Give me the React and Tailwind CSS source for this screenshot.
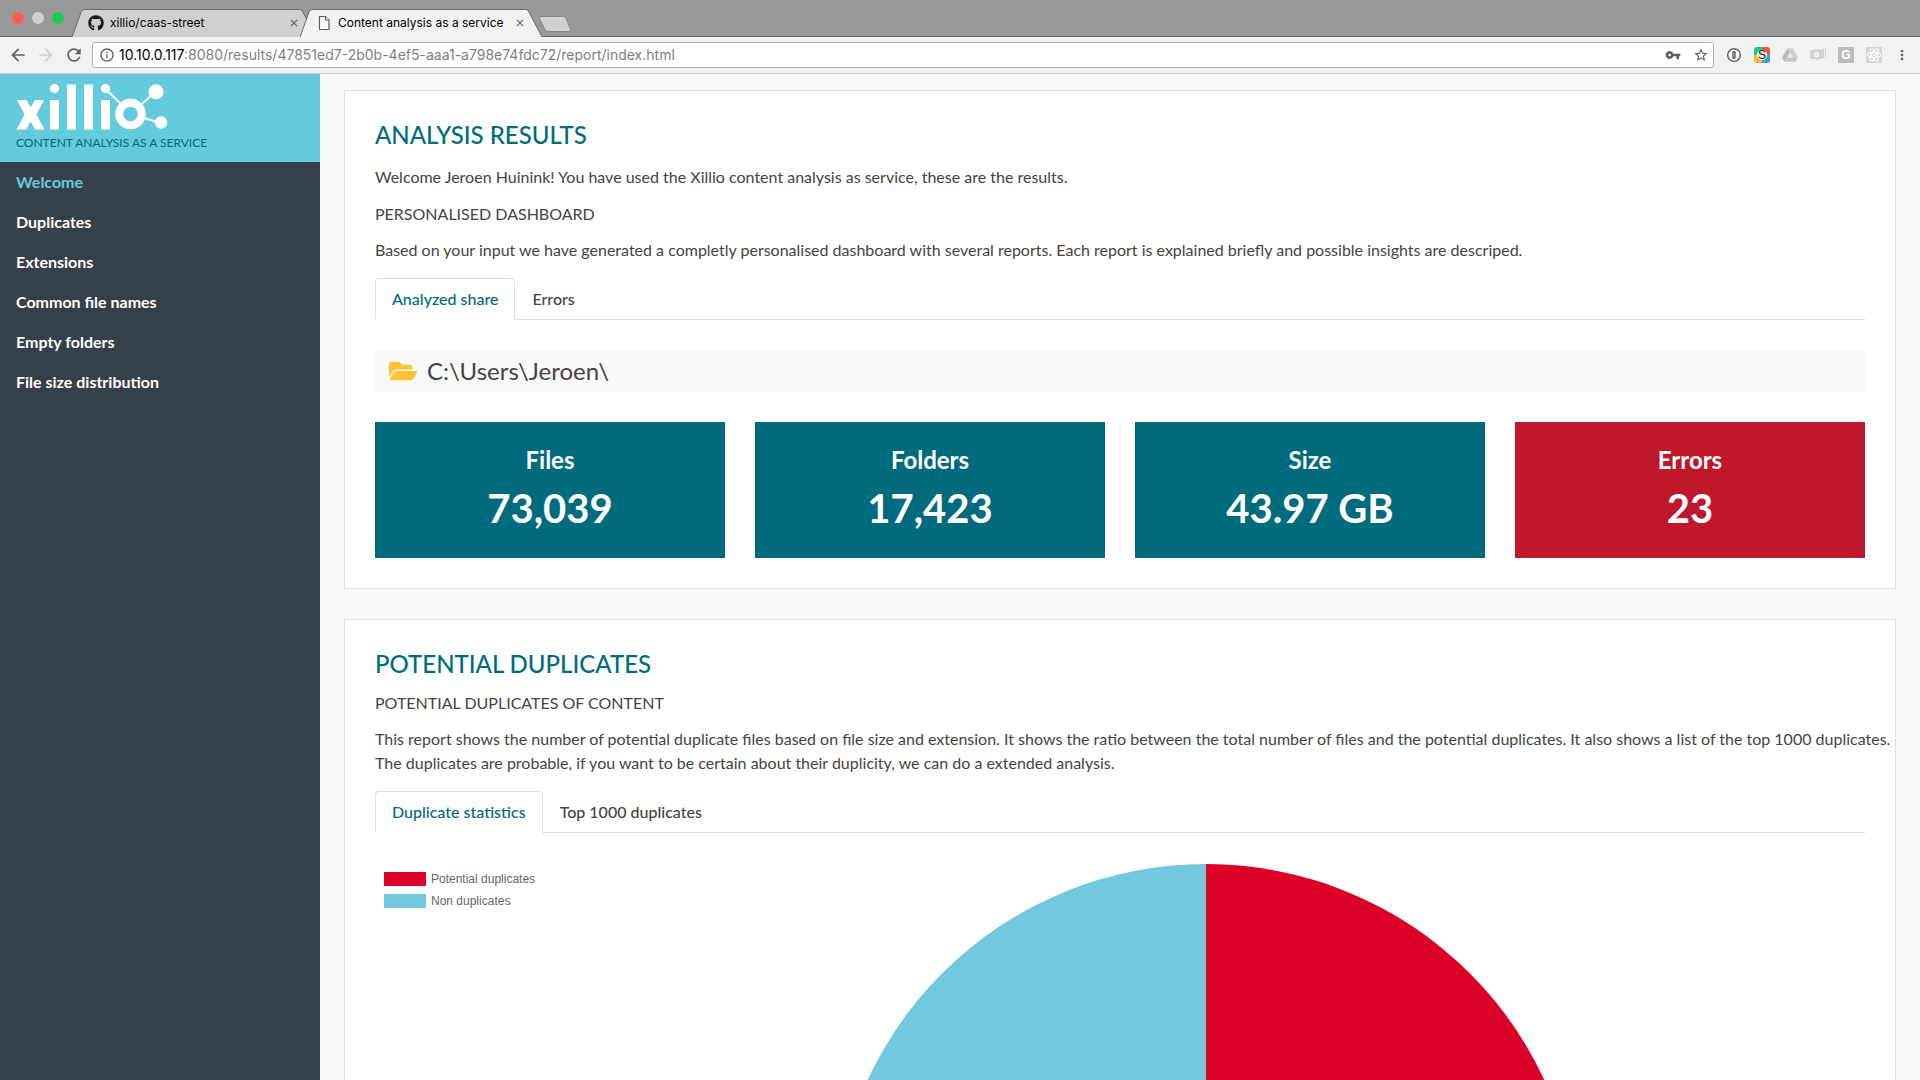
import React, { useState } from 'react';
import { FaFolderOpen, FaGithub } from 'react-icons/fa';
import { MdArrowBack, MdArrowForward, MdRefresh, MdClose, MdVpnKey, MdStarBorder, MdMoreVert, MdInfoOutline } from 'react-icons/md';

const NAV_ITEMS = [
  'Welcome',
  'Duplicates',
  'Extensions',
  'Common file names',
  'Empty folders',
  'File size distribution',
];

const STATS = [
  { label: 'Files', value: '73,039' },
  { label: 'Folders', value: '17,423' },
  { label: 'Size', value: '43.97 GB' },
  { label: 'Errors', value: '23', error: true },
];

const LEGEND = [
  { label: 'Potential duplicates', swatch: 'bg-[#dc0029]' },
  { label: 'Non duplicates', swatch: 'bg-[#72c8dd]' },
];

const BrowserTab = ({ title, icon, active, width }) => (
  <div className={`relative flex h-7 items-center ${width} ${active ? 'z-10' : '-mr-4'}`}>
    <svg className="absolute inset-0 h-full w-full" viewBox="0 0 240 28" preserveAspectRatio="none">
      <path
        d="M0 28 L9 3 Q10 .5 12 .5 L224 .5 Q226 .5 227 3 L240 28 Z"
        fill={active ? '#f2f2f2' : '#d0d0d0'}
      />
      <path
        d="M0 28 L9 3 Q10 .5 12 .5 L224 .5 Q226 .5 227 3 L240 28"
        fill="none"
        stroke="#6b6b6b"
        vectorEffect="non-scaling-stroke"
      />
    </svg>
    <div className="relative flex w-full items-center px-4">
      {icon}
      <span className="ml-1.5 flex-1 truncate text-xs text-black">{title}</span>
      <button type="button" aria-label={`Close ${title}`} className="text-[#5a5a5a]">
        <MdClose size={12} />
      </button>
    </div>
  </div>
);

const PageIcon = () => (
  <svg width="16" height="16" viewBox="0 0 16 16" fill="#fff" stroke="#5c5c5c" strokeWidth="1.2">
    <path d="M3.5 1.5h6l3.5 3.5v9.5h-9.5z" />
    <path d="M9.5 1.5v3.5h3.5" />
  </svg>
);

const Extensions = () => (
  <div className="flex items-center gap-3">
    <svg width="16" height="16" viewBox="0 0 16 16">
      <circle cx="8" cy="8" r="6.3" fill="#fff" stroke="#646467" strokeWidth="1.5" />
      <rect x="6.3" y="4" width="3.4" height="8" rx="1.2" fill="#646467" />
      <path d="M8 5.8v4.4" stroke="#ccc" strokeWidth=".7" />
    </svg>
    <svg width="16" height="16" viewBox="0 0 16 16">
      <path d="M3 0h5v8H0V3a3 3 0 0 1 3-3" fill="#1ecb82" />
      <path d="M8 0h5a3 3 0 0 1 3 3v5H8z" fill="#f0574a" />
      <path d="M0 8h8v8H3a3 3 0 0 1-3-3z" fill="#fbb42c" />
      <path d="M8 8h8v5a3 3 0 0 1-3 3H8z" fill="#3a9fdc" />
      <circle cx="8" cy="8" r="5.3" fill="#fff" opacity=".75" />
      <text x="8" y="12.3" textAnchor="middle" fontSize="12" fontFamily="Liberation Sans, sans-serif" fill="#1b2b3b">S</text>
    </svg>
    <svg width="16" height="16" viewBox="0 0 16 16">
      <path d="M5.5 1.2h5L16 10.5h-5z" fill="#cfcfcf" />
      <path d="M5.5 1.2 0 10.5l2.6 4.3L8 5.6z" fill="#b9b9b9" />
      <path d="M5.3 10.5H16l-2.6 4.3H2.6z" fill="#c4c4c4" />
      <path d="M8 6.2l2.5 4.3h-5z" fill="#e9e9e9" />
    </svg>
    <svg width="16" height="16" viewBox="0 0 16 16" fill="#d3d3d3">
      <path d="M1.5 2.5H12L14 1v10l-2 1H9.5L8 14l-1.5-2h-5A1.5 1.5 0 0 1 0 10.5V4a1.5 1.5 0 0 1 1.5-1.5" />
      <path d="M15 2h1v8.5h-1z" />
      <rect x="4.8" y="6" width="3.4" height="3.4" rx="1" fill="none" stroke="#fff" strokeWidth="1.3" />
    </svg>
    <svg width="16" height="16" viewBox="0 0 16 16">
      <rect width="16" height="16" fill="#bdbdbd" />
      <text x="8" y="12.3" textAnchor="middle" fontSize="12" fontWeight="700" fontFamily="Liberation Sans, sans-serif" fill="#fff">G</text>
    </svg>
    <svg width="16" height="16" viewBox="0 0 16 16">
      <rect width="16" height="16" fill="#d6d6d6" />
      <g fill="none" stroke="#fff" strokeWidth="1.1">
        <ellipse cx="8" cy="8" rx="6.6" ry="2.6" />
        <ellipse cx="8" cy="8" rx="6.6" ry="2.6" transform="rotate(60 8 8)" />
        <ellipse cx="8" cy="8" rx="6.6" ry="2.6" transform="rotate(120 8 8)" />
      </g>
      <circle cx="8" cy="8" r="1.3" fill="#fff" />
    </svg>
  </div>
);

const BrowserChrome = () => (
  <header className="shrink-0 font-['Inter',sans-serif]">
    <div className="flex h-[37px] items-end border-b border-[#6b6b6b] bg-[#999]">
      <div className="flex gap-2 self-center pr-2 pl-3">
        <span className="size-3 rounded-full bg-[#fc5b57]" />
        <span className="size-3 rounded-full bg-[#d0d0d0]" />
        <span className="size-3 rounded-full bg-[#1ccb4f]" />
      </div>
      <div className="-mb-px flex items-end">
        <BrowserTab title="xillio/caas-street" icon={<FaGithub size={16} color="#1b1b1b" />} width="w-[244px]" />
        <BrowserTab title="Content analysis as a service" icon={<PageIcon />} width="w-[242px]" active />
        <button type="button" aria-label="New tab" className="-ml-1 mb-1">
          <svg width="34" height="18" viewBox="0 0 34 18">
            <path d="M3 1.5h22.5q2 0 2.5 1.5l4.5 11.5q.5 2-1.5 2H9.5q-2 0-2.5-1.5L1.5 3.5q-.5-2 1.5-2" fill="#d0d0d0" stroke="#858585" />
          </svg>
        </button>
      </div>
    </div>
    <div className="flex h-[37px] items-center border-b border-[#cfcfcf] bg-[#f2f2f2] pr-2.5 pl-2">
      <div className="flex items-center gap-2 pr-2 text-[#5f5f5f]">
        <button type="button" aria-label="Back"><MdArrowBack size={20} /></button>
        <button type="button" aria-label="Forward" className="text-[#d0d0d0]"><MdArrowForward size={20} /></button>
        <button type="button" aria-label="Reload"><MdRefresh size={20} /></button>
      </div>
      <div className="flex h-[26px] flex-1 items-center gap-3 rounded-[3px] border border-[#b4b4b4] bg-white pr-1 pl-1.5 text-[#5f5f5f]">
        <MdInfoOutline size={16} />
        <a href="#" className="-ml-2 flex-1 text-sm text-[#7f7f7f]">
          <span className="text-black">10.10.0.117</span>:8080/results/47851ed7-2b0b-4ef5-aaa1-a798e74fdc72/report/index.html
        </a>
        <MdVpnKey size={16} />
        <MdStarBorder size={16} />
      </div>
      <div className="flex items-center gap-3 pl-3 text-[#5f5f5f]">
        <Extensions />
        <button type="button" aria-label="Menu"><MdMoreVert size={16} /></button>
      </div>
    </div>
  </header>
);

const XillioLogo = () => (
  <svg width="152" height="46" viewBox="0 0 152 46" fill="#fff" role="img" aria-label="xillio">
    <path d="M1 16h9.5l4.2 7.5L19 16h9l-7.5 14.5 8 15H19l-4.3-8-4.7 8H.5l8-15z" />
    <circle cx="38.5" cy="4.5" r="4.6" />
    <rect x="34" y="16" width="9" height="29.5" rx="1" />
    <rect x="51" y=".5" width="9" height="45" rx="1" />
    <rect x="68" y=".5" width="9" height="45" rx="1" />
    <rect x="85" y="16" width="9" height="29.5" rx="1" />
    <circle cx="89.5" cy="4.5" r="4.6" />
    <circle cx="114.5" cy="30" r="11.3" fill="none" stroke="#fff" strokeWidth="8" />
    <path d="M89.5 5 106 21M124 22l16-15M128 34l17 5" stroke="#fff" strokeWidth="2" />
    <circle cx="140" cy="7.8" r="7.5" />
    <circle cx="145" cy="38.5" r="6.2" />
  </svg>
);

const Sidebar = ({ current, onSelect }) => (
  <aside className="flex w-80 shrink-0 flex-col bg-[#36404a]">
    <div className="h-[88px] bg-[#65cadc] px-4 pt-2.5">
      <XillioLogo />
      <p className="mt-[5px] text-xs leading-4 text-[#006b7d] uppercase">Content analysis as a service</p>
    </div>
    <nav>
      {NAV_ITEMS.map((item) => (
        <a
          key={item}
          href="#"
          onClick={() => onSelect(item)}
          className={`block px-4 text-base leading-10 font-bold ${item === current ? 'text-[#65cadc]' : 'text-white'}`}
        >
          {item}
        </a>
      ))}
    </nav>
  </aside>
);

const Tabs = ({ items }) => {
  const [active, setActive] = useState(items[0]);

  return (
    <div role="tablist" className="flex border-b border-[#dee2e6]">
      {items.map((item) => (
        <button
          key={item}
          type="button"
          role="tab"
          aria-selected={item === active}
          onClick={() => setActive(item)}
          className={`-mb-px h-[42px] rounded-t border px-4 text-base font-medium ${
            item === active
              ? 'border-[#dee2e6] border-b-white bg-white text-[#006b7d]'
              : 'border-transparent text-[#444]'
          }`}
        >
          {item}
        </button>
      ))}
    </div>
  );
};

const Card = ({ title, children }) => (
  <section className="border border-[#dee2e6] bg-white p-[30px]">
    <h2 className="text-2xl leading-7 font-medium text-[#006b7d] uppercase">{title}</h2>
    {children}
  </section>
);

const PieChart = () => (
  <div className="flex pt-[31px]">
    <ul className="w-[172px] shrink-0 space-y-2 pt-2 pl-[9px] font-['Liberation_Sans',sans-serif] text-xs leading-[14px] text-[#666]">
      {LEGEND.map(({ label, swatch }) => (
        <li key={label} className="flex items-center gap-[5px]">
          <span className={`h-3.5 w-[42px] ${swatch}`} />
          {label}
        </li>
      ))}
    </ul>
    <svg className="mx-auto h-[746px]" viewBox="-373 -373 746 746">
      <path d="M0 -373A373 373 0 0 1 0 373Z" fill="#dc0029" />
      <path d="M0 -373A373 373 0 0 0 0 373Z" fill="#72c8dd" />
    </svg>
  </div>
);

export default function App() {
  const [page, setPage] = useState('Welcome');

  return (
    <div className="flex h-screen flex-col overflow-hidden font-['Lato',sans-serif] text-[#444]">
      <BrowserChrome />
      <div className="flex min-h-0 flex-1">
        <Sidebar current={page} onSelect={setPage} />
        <main className="min-w-0 flex-1 space-y-[30px] overflow-y-auto bg-[#f8f9fb] px-6 py-4 text-base leading-6 [scrollbar-width:none]">
          <Card title="Analysis results">
            <p className="mt-4">
              Welcome Jeroen Huinink! You have used the Xillio content analysis as service, these are the results.
            </p>
            <h3 className="mt-[13px] uppercase">Personalised dashboard</h3>
            <p className="mt-3 mb-4">
              Based on your input we have generated a completly personalised dashboard with several reports. Each report is explained briefly and possible insights are descriped.
            </p>
            <Tabs items={['Analyzed share', 'Errors']} />
            <div className="mt-[30px] flex h-[42px] items-center gap-2.5 bg-[#f8f9fb] px-3.5 text-2xl">
              <FaFolderOpen size={28} color="#fec431" />
              C:\Users\Jeroen\
            </div>
            <div className="mt-[30px] grid grid-cols-4 gap-[30px]">
              {STATS.map(({ label, value, error }) => (
                <div
                  key={label}
                  className={`flex h-[136px] flex-col items-center justify-center font-bold text-white ${error ? 'bg-[#bf172b]' : 'bg-[#006b7d]'}`}
                >
                  <span className="text-2xl leading-9">{label}</span>
                  <span className="text-[40px] leading-[60px]">{value}</span>
                </div>
              ))}
            </div>
          </Card>

          <Card title="Potential duplicates">
            <h3 className="mt-[13px] uppercase">Potential duplicates of content</h3>
            <p className="mt-3 mb-4 min-[1900px]:whitespace-nowrap">
              This report shows the number of potential duplicate files based on file size and extension. It shows the ratio between the total number of files and the potential duplicates. It also shows a list of the top 1000 duplicates.
              <br />
              The duplicates are probable, if you want to be certain about their duplicity, we can do a extended analysis.
            </p>
            <Tabs items={['Duplicate statistics', 'Top 1000 duplicates']} />
            <PieChart />
          </Card>
        </main>
      </div>
    </div>
  );
}
